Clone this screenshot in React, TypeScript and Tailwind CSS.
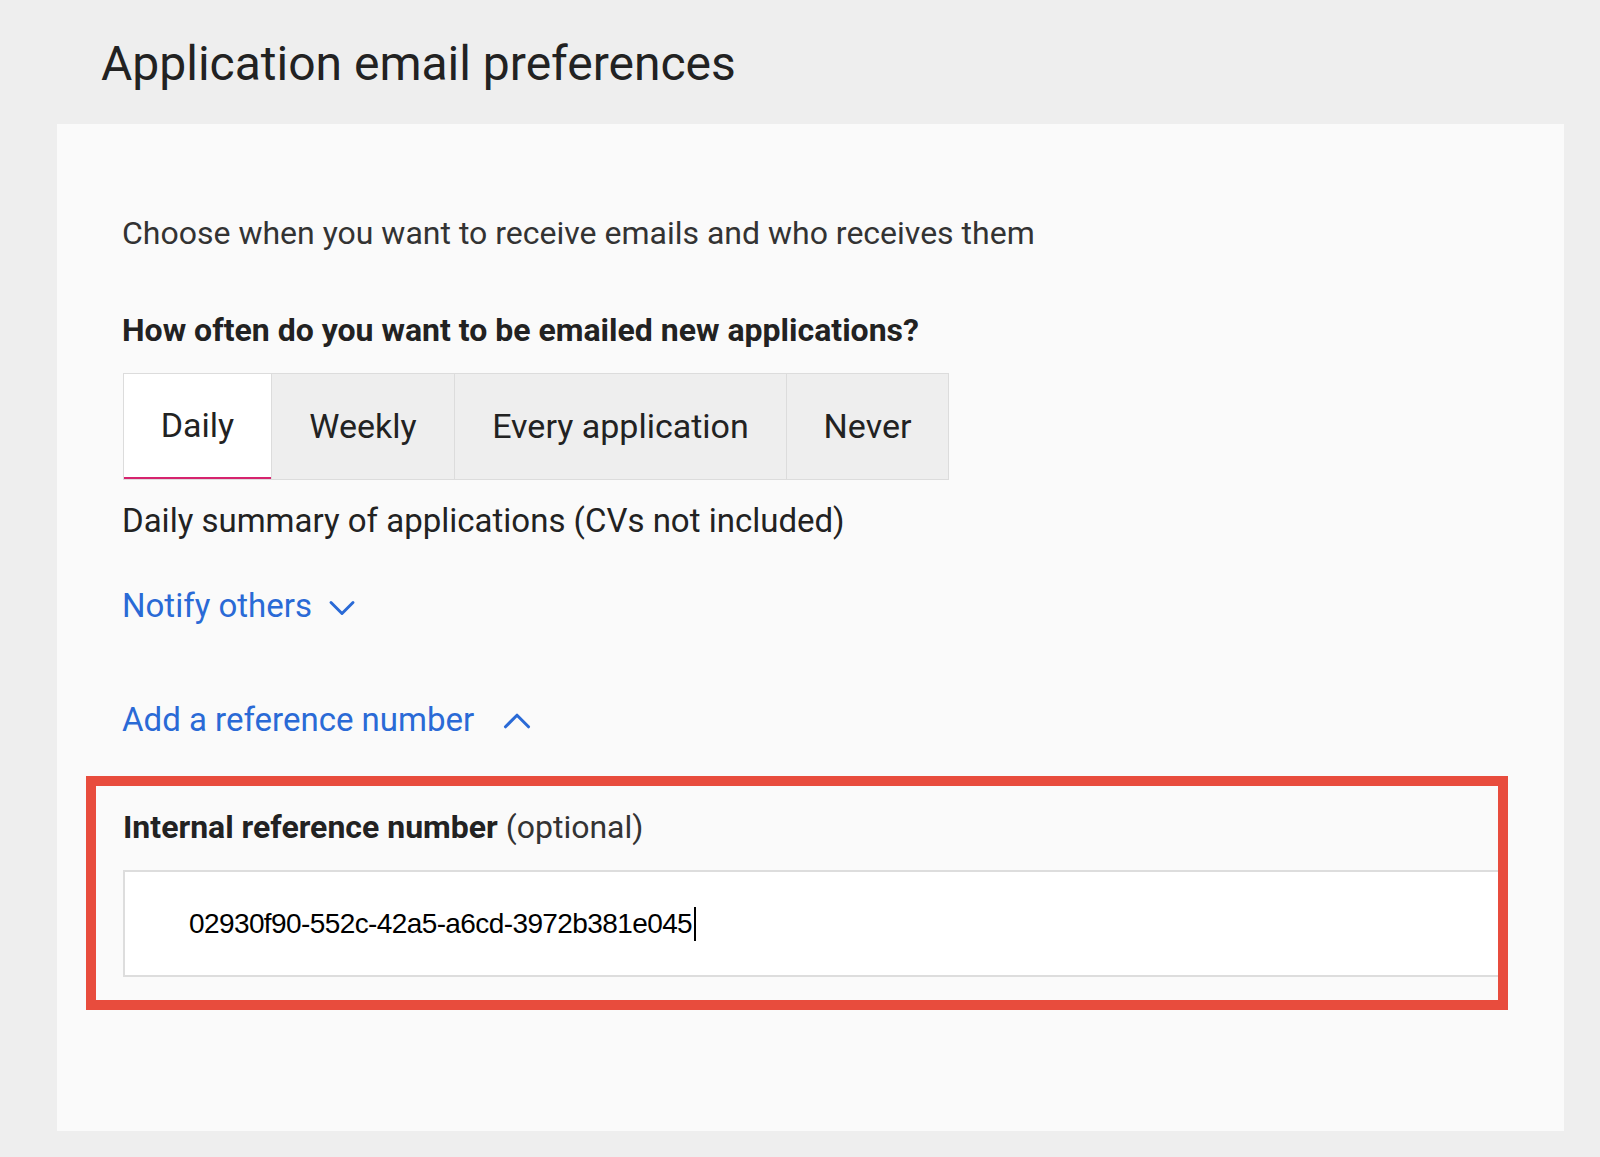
import { ChevronDown, ChevronUp } from 'lucide-react';

const tabs = [
  { label: 'Daily', width: 'w-[147px]' },
  { label: 'Weekly', width: 'w-[183px]' },
  { label: 'Every application', width: 'w-[332px]' },
  { label: 'Never', width: 'w-[162px]' }
];

export default function App() {
  return (
    <div className="min-h-[1157px] w-[1600px] bg-[#eeeeee] font-[Roboto,sans-serif] text-[#222]">
      <h1 className="pl-[101px] pt-[34px] h-[124px] text-[48px] leading-[60px] font-normal">
        Application email preferences
      </h1>
      <div className="ml-[57px] w-[1507px] h-[1007px] bg-[#fafafa] pt-[88px]">
        <p className="pl-[65px] text-[32px] leading-[42px] text-[#333]">
          Choose when you want to receive emails and who receives them
        </p>
        <p className="pl-[65px] mt-[55px] text-[32px] leading-[42px] font-bold text-[#222]">
          How often do you want to be emailed new applications?
        </p>
        <div className="ml-[66px] mt-[22px] flex w-fit border border-[#dcdcdc] h-[107px]">
          {tabs.map((t, i) => (
            <div
              key={t.label}
              className={
                i === 0
                  ? `${t.width} flex items-center justify-center bg-white border-b-2 border-b-[#d6246e] text-[34px] text-[#222]`
                  : `${t.width} flex items-center justify-center bg-[#eeeeee] border-l border-[#dcdcdc] text-[34px] text-[#222]`
              }
            >
              {t.label}
            </div>
          ))}
        </div>
        <p className="pl-[65px] mt-[20px] text-[33px] leading-[42px] text-[#222]">
          Daily summary of applications (CVs not included)
        </p>
        <div className="pl-[65px] mt-[40px] flex items-center gap-[8px] text-[33px] leading-[42px] text-[#2a6ad6]">
          Notify others
          <ChevronDown size={44} strokeWidth={1.6} className="mt-[4px]" />
        </div>
        <div className="pl-[65px] mt-[66px] flex items-center gap-[20px] text-[33px] leading-[42px] text-[#2a6ad6]">
          Add a reference number
          <ChevronUp size={46} strokeWidth={1.6} className="mt-[2px]" />
        </div>
        <div className="ml-[29px] mt-[32px] w-[1422px] h-[234px] border-[10px] border-[#e84c3d] pt-[20px] overflow-hidden">
          <p className="pl-[27px] text-[32px] leading-[42px] text-[#222]">
            <span className="font-bold">Internal reference number</span>{' '}
            <span className="text-[#333]">(optional)</span>
          </p>
          <div className="ml-[27px] mt-[22px] h-[107px] bg-white border-2 border-r-0 border-[#dddddd] flex items-center pl-[64px]">
            <span className="font-[Liberation_Sans,sans-serif] text-[28px] tracking-[-0.6px] text-black">
              02930f90-552c-42a5-a6cd-3972b381e045
            </span>
            <span className="ml-[2px] w-[1.5px] h-[34px] bg-black" />
          </div>
        </div>
      </div>
    </div>
  );
}
